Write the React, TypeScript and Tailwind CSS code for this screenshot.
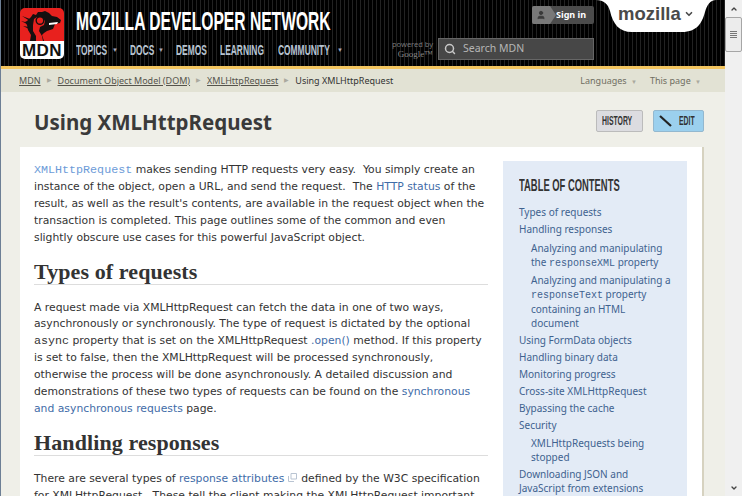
import { ChevronDown, ChevronUp, Search, User } from 'lucide-react';

const condensed = "font-['Liberation_Sans',sans-serif] font-bold whitespace-nowrap block origin-left";

function Logo() {
  return (
    <div className="w-[44px] h-[51px] flex flex-col shrink-0">
      <svg width="44" height="33" viewBox="0 0 44 33" className="block">
        <path d="M0 33V5a5 5 0 0 1 5-5h34a5 5 0 0 1 5 5v28z" fill="#e8211e" />
        <path d="M11 9l2-3 3 1 2-3 4 0 3-1 4 2 3 3 5 1 4 3-1 3-5 1-2 5-6 2-3 2-2 2 2 6h-14l1-6-3-5-1-5-2-3 2-1z" fill="#161010" />
        <path d="M14 11l3-2 6 1 2 3-1 4-4 2-1 4 3 5 1 5h-7l0-5-3-5 0-6z" fill="#e8211e" />
        <circle cx="20" cy="12.5" r="3.8" fill="#e8211e" stroke="#161010" strokeWidth="1.4" />
        <path d="M29 15l9-1-1 2-8 1z" fill="#fff" />
        <path d="M2 8l8 3-1 1.5zM1 13l8 2-1 1.5zM3 18l6 1-1 1.5z" fill="#161010" />
      </svg>
      <div className="h-[18px] bg-white rounded-b-[5px] flex items-center justify-center text-[#111] text-[17px] leading-none font-bold font-['Liberation_Sans',sans-serif] tracking-[0.5px]">
        MDN
      </div>
    </div>
  );
}

function NavItem({ label, width, arrow }: { label: string; width: string; arrow?: boolean }) {
  return (
    <span className="flex items-center gap-[4px] text-[#b8c4d2]">
      <span className={`${width} h-[16px] flex`}>
        <span className={`${condensed} scale-x-[0.58] text-[14.5px] leading-[16px]`}>{label}</span>
      </span>
      {arrow && <span className="w-[5px] text-[6px] leading-none text-[#aab]">▼</span>}
    </span>
  );
}

function MozillaTab() {
  return (
    <div className="relative ml-[2px] w-[120px] h-[33px] shrink-0">
      <svg width="120" height="33" viewBox="0 0 120 33" className="block">
        <path d="M0 0C8 0 12 4 14 11 17 24 23 32 36 32H86C101 32 106 23 109 12 111 5 114 0 120 0Z" fill="#fff" />
      </svg>
      <div className="absolute left-[22px] top-[2px] flex items-center gap-[3px] text-[#4a4a4a] text-[18.5px] leading-[24px] font-bold font-['Liberation_Sans',sans-serif]">
        mozilla
        <ChevronDown size={10} strokeWidth={4} />
      </div>
    </div>
  );
}

function Header() {
  return (
    <header className="h-[66px] flex pl-[19px] bg-[repeating-linear-gradient(90deg,#000_0,#000_3px,#222_3px,#222_4px)]">
      <div className="pt-[8px] shrink-0">
        <Logo />
      </div>
      <div className="ml-[12px] pt-[9px] flex flex-col w-[300px]">
        <div className="h-[24px] flex text-white">
          <span className={`${condensed} scale-x-[0.625] text-[25px] leading-[24px]`}>MOZILLA DEVELOPER NETWORK</span>
        </div>
        <nav className="mt-[9px] flex gap-[13px]">
          <NavItem label="TOPICS" width="w-[32px]" arrow />
          <NavItem label="DOCS" width="w-[24px]" arrow />
          <NavItem label="DEMOS" width="w-[31px]" />
          <NavItem label="LEARNING" width="w-[45px]" />
          <NavItem label="COMMUNITY" width="w-[55px]" arrow />
        </nav>
      </div>
      <div className="ml-auto w-[202px] flex flex-col items-end pt-[6px]">
        <div className="w-[62px] h-[18px] bg-[#4b4b4b] rounded-[2px] flex items-center text-white text-[9px] font-bold font-['Noto_Sans',sans-serif]">
          <span className="w-[24px] h-full bg-[#787878] rounded-l-[2px] flex items-center pl-[4px] [clip-path:polygon(0_0,75%_0,100%_50%,75%_100%,0_100%)]">
            <User size={10} fill="#3a3a3a" stroke="#3a3a3a" />
          </span>
          <span className="whitespace-nowrap">Sign in</span>
        </div>
        <div className="mt-[14px] flex items-center self-stretch">
          <div className="w-[41px] text-right text-[#777] text-[7.5px] leading-[10px] font-['Noto_Sans',sans-serif] whitespace-nowrap">
            powered by
            <div className="font-['Liberation_Serif',serif] text-[9px] text-[#888]">Google™</div>
          </div>
          <div className="ml-[5px] w-[156px] h-[22px] bg-[#474747] border border-[#666] flex items-center pl-[5px] gap-[7px] text-[#b5b5b5] text-[10.5px] font-['Noto_Sans',sans-serif]">
            <Search size={12} strokeWidth={3} className="text-[#c8c8c8]" />
            Search MDN
          </div>
        </div>
      </div>
      <div className="w-[131px] shrink-0 flex">
        <MozillaTab />
      </div>
    </header>
  );
}

function Crumb({ label }: { label: string }) {
  return (
    <>
      <span className="underline text-[#55544c]">{label}</span>
      <span className="text-[6px] text-[#aaa99e]">▶</span>
    </>
  );
}

function Breadcrumbs() {
  return (
    <div className="h-[23px] bg-[#e2e2d4] flex items-center pl-[18px] pr-[24px] text-[9px] font-['Noto_Sans',sans-serif] whitespace-nowrap">
      <div className="flex items-center gap-[6px]">
        <Crumb label="MDN" />
        <Crumb label="Document Object Model (DOM)" />
        <Crumb label="XMLHttpRequest" />
        <span className="text-[#333]">Using XMLHttpRequest</span>
      </div>
      <div className="ml-auto flex gap-[13px] text-[#6f6e62]">
        <span>Languages <span className="text-[6px] text-[#aaa99e] ml-[2px]">▼</span></span>
        <span>This page <span className="text-[6px] text-[#aaa99e] ml-[2px]">▼</span></span>
      </div>
    </div>
  );
}

function Toc() {
  const top = 'block leading-[17px]';
  const sub = 'block pl-[12px] leading-[14.4px]';
  const code = "font-['Liberation_Mono',monospace] text-[10px] leading-none";
  return (
    <aside className="w-[184px] h-[340px] shrink-0 mt-[14px] bg-[#e3ebf6] px-[16px] text-[#40628f] text-[10px] font-['Noto_Sans',sans-serif] whitespace-nowrap">
      <div className="h-[18px] flex mt-[15px] mb-[10px] text-[#333]">
        <span className={`${condensed} scale-x-[0.57] text-[16.5px] leading-[18px]`}>TABLE OF CONTENTS</span>
      </div>
      <a className={top}>Types of requests</a>
      <a className={top}>Handling responses</a>
      <div className="mt-[3px]">
        <a className={sub}>Analyzing and manipulating</a>
        <a className={sub}>the <span className={code}>responseXML</span> property</a>
        <a className={`${sub} mt-[3px]`}>Analyzing and manipulating a</a>
        <a className={sub}><span className={code}>responseText</span> property</a>
        <a className={sub}>containing an HTML</a>
        <a className={sub}>document</a>
      </div>
      <div className="mt-[2px]">
        <a className={top}>Using FormData objects</a>
        <a className={top}>Handling binary data</a>
        <a className={top}>Monitoring progress</a>
        <a className={top}>Cross-site XMLHttpRequest</a>
        <a className={top}>Bypassing the cache</a>
        <a className={top}>Security</a>
      </div>
      <div className="mt-[2px]">
        <a className="block pl-[12px] leading-[14px]">XMLHttpRequests being</a>
        <a className="block pl-[12px] leading-[14px]">stopped</a>
      </div>
      <a className="block leading-[14px] mt-[3px]">Downloading JSON and</a>
      <a className="block leading-[14px]">JavaScript from extensions</a>
    </aside>
  );
}

function Heading({ children }: { children: string }) {
  return (
    <h2 className="font-['Liberation_Serif',serif] font-bold text-[#333] text-[22px] tracking-[0.1px] leading-[22px] border-b border-[#ddd] pb-[1px] mb-[15px] w-[454px]">
      {children}
    </h2>
  );
}

function Article() {
  const link = 'text-[#3f6ca8]';
  return (
    <div className="w-[454px] shrink-0 ml-[14px] mr-[15px] pt-[15px] text-[#333] text-[10.8px] leading-[16.9px] font-['DejaVu_Sans',sans-serif] whitespace-nowrap">
      <p>
        <span className="font-['Liberation_Mono',monospace] text-[11.7px] leading-none text-[#6c9bd8]">XMLHttpRequest</span> makes sending HTTP requests very easy.&nbsp; You simply create an<br />
        instance of the object, open a URL, and send the request.&nbsp; The <span className={link}>HTTP status</span> of the<br />
        result, as well as the result's contents, are available in the request object when the<br />
        transaction is completed. This page outlines some of the common and even<br />
        slightly obscure use cases for this powerful JavaScript object.
      </p>
      <div className="mt-[14px]">
        <Heading>Types of requests</Heading>
      </div>
      <p>
        A request made via XMLHttpRequest can fetch the data in one of two ways,<br />
        asynchronously or synchronously. The type of request is dictated by the optional<br />
        <span className="font-['Liberation_Mono',monospace] text-[11.7px] leading-none text-[#333]">async</span> property that is set on the XMLHttpRequest <span className={link}>.open()</span> method. If this property<br />
        is set to false, then the XMLHttpRequest will be processed synchronously,<br />
        otherwise the process will be done asynchronously. A detailed discussion and<br />
        demonstrations of these two types of requests can be found on the <span className={link}>synchronous</span><br />
        <span className={link}>and asynchronous requests</span> page.
      </p>
      <div className="mt-[14px]">
        <Heading>Handling responses</Heading>
      </div>
      <p>
        There are several types of <span className={link}>response attributes</span>
        <svg width="9" height="9" viewBox="0 0 9 9" className="inline mx-[4px] align-baseline">
          <path d="M3 .5h5.5V6H3zM.5 3v5.5H6" fill="none" stroke="#b9c4d2" />
        </svg>
        defined by the W3C specification<br />
        for XMLHttpRequest.&nbsp; These tell the client making the XMLHttpRequest important
      </p>
    </div>
  );
}

function Scrollbar() {
  return (
    <div className="w-[17px] shrink-0 bg-[#f0f0f0] flex flex-col items-center justify-between">
      <div className="w-full flex flex-col">
        <div className="h-[17px] flex items-center justify-center">
          <ChevronUp size={8} strokeWidth={4} className="text-[#444]" />
        </div>
        <div className="h-[35px] bg-[#ececec] border border-[#a6a6a6] rounded-[2px] flex flex-col items-center justify-center gap-px">
          <div className="w-[7px] h-px bg-[#777]" />
          <div className="w-[7px] h-px bg-[#777]" />
          <div className="w-[7px] h-px bg-[#777]" />
          <div className="w-[7px] h-px bg-[#777]" />
        </div>
      </div>
      <div className="h-[17px] flex items-center justify-center">
        <ChevronDown size={8} strokeWidth={4} className="text-[#444]" />
      </div>
    </div>
  );
}

export default function App() {
  return (
    <div className="w-[742px] h-[496px] overflow-hidden flex bg-[#f0f0e9] border-l border-[#6d7f95]">
      <div className="flex-1 min-w-0 flex flex-col">
        <Header />
        <div className="h-[3px] bg-[#f3c55f]" />
        <Breadcrumbs />
        <main className="flex-1 min-h-0 overflow-hidden bg-[#efefe8] pl-[19px]">
          <div className="h-[55px] flex items-start">
            <h1 className="ml-[14px] mt-[15px] text-[20.5px] leading-[30px] font-bold text-[#3a3a3a] font-['Noto_Sans',sans-serif] whitespace-nowrap">
              Using XMLHttpRequest
            </h1>
            <div className="ml-auto mr-[21px] mt-[18px] flex gap-[10px] text-[#333]">
              <span className="w-[47px] h-[22px] bg-[#dcdce0] border border-[#bbb] rounded-[2px] pl-[5px] flex">
                <span className={`${condensed} scale-x-[0.55] text-[12.5px] leading-[20px]`}>HISTORY</span>
              </span>
              <span className="w-[51px] h-[22px] bg-[#9bd0ee] border border-[#93b8cf] rounded-[2px] flex items-center pl-[5px] gap-[7px]">
                <svg width="13" height="13" viewBox="0 0 13 13" className="shrink-0">
                  <path d="M1 1l11 10" stroke="#222" strokeWidth="2.2" />
                </svg>
                <span className="w-[17px] flex">
                  <span className={`${condensed} scale-x-[0.55] text-[12.5px] leading-[20px]`}>EDIT</span>
                </span>
              </span>
            </div>
          </div>
          <div className="w-[684px] h-[400px] bg-white border-r-2 border-[#d6d2c0] flex">
            <Article />
            <Toc />
          </div>
        </main>
      </div>
      <Scrollbar />
    </div>
  );
}
